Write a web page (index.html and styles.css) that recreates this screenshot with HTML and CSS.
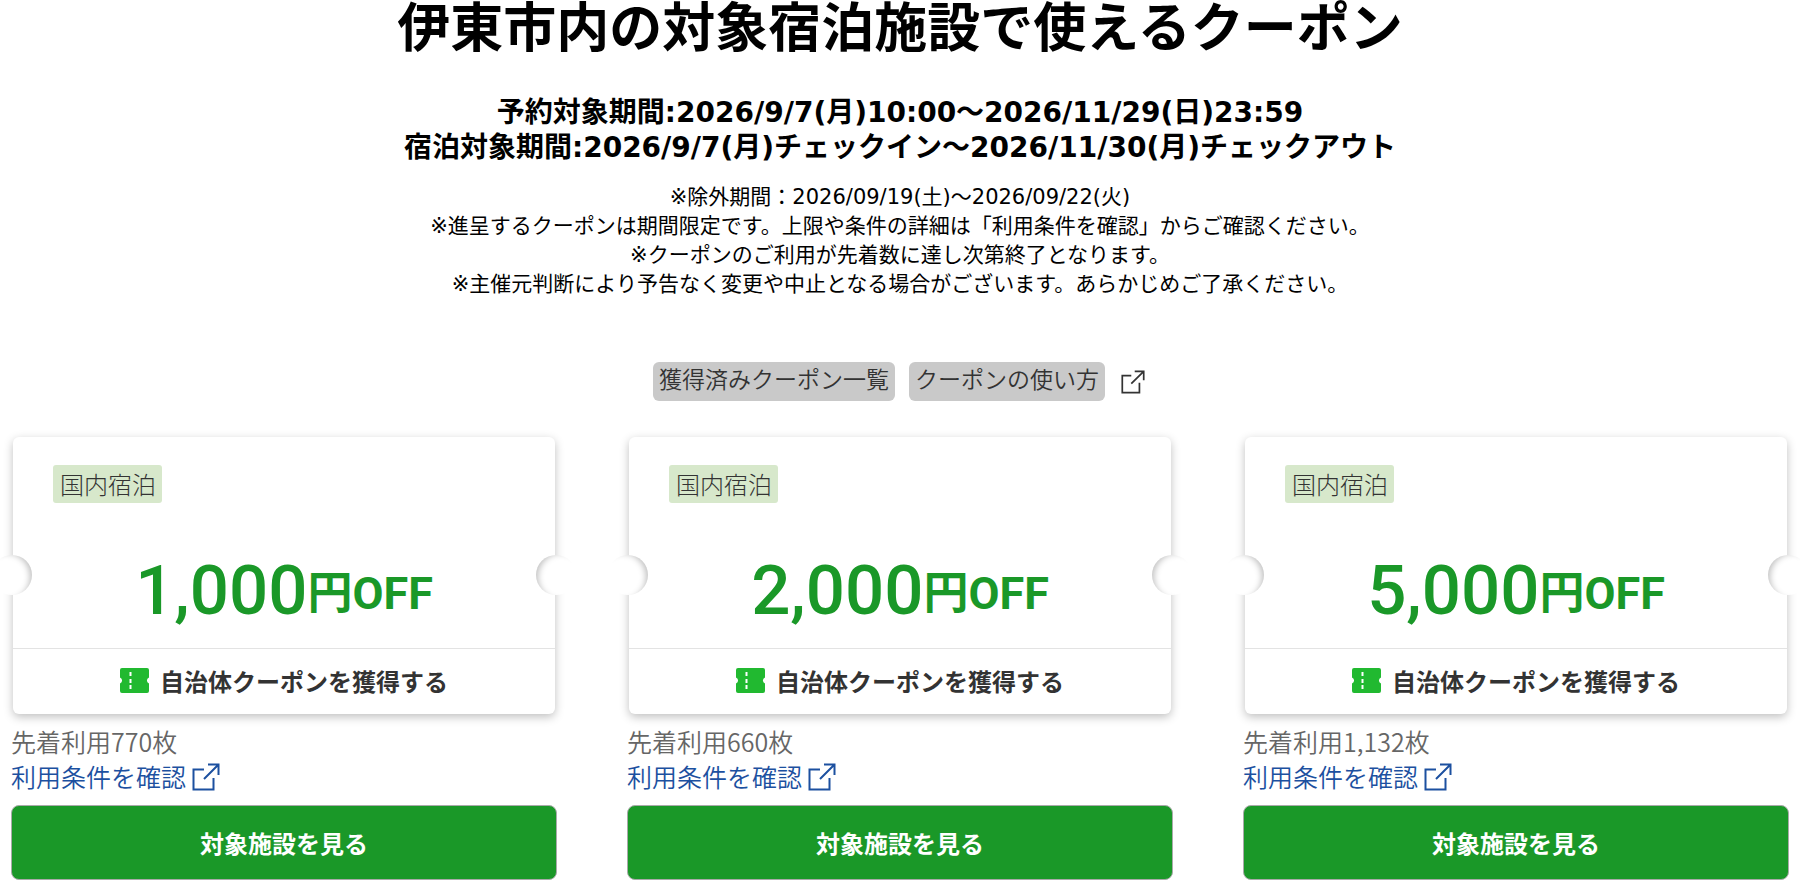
FILE: index.html
```
<!DOCTYPE html>
<html lang="ja">
<head>
  <meta charset="UTF-8">
  <title>伊東市内の対象宿泊施設で使えるクーポン</title>
  <link rel="stylesheet" href="styles.css">
</head>
<body>

  <!-- アイコン定義 -->
  <svg class="defs" aria-hidden="true">
    <symbol id="icon-external" viewBox="0 0 28 28">
      <path d="M12 6.500H1.500V26.500H21.500V15" />
      <path d="M16 1.500H26.500V12M26.500 1.500L12 16" />
    </symbol>
    <symbol id="icon-ticket" viewBox="0 0 29 25">
      <path fill="#21b930" d="M2 0H27Q29 0 29 2V9.500A3.200 3.200 0 0 0 29 15.500V23Q29 25 27 25H2Q0 25 0 23V15.500A3.200 3.200 0 0 0 0 9.500V2Q0 0 2 0Z" />
      <path stroke="#fff" stroke-width="2" d="M10.500 4V8M10.500 11V15M10.500 17V21" />
    </symbol>
  </svg>

  <header class="intro">
    <h1>伊東市内の対象宿泊施設で使えるクーポン</h1>
    <h2>
      予約対象期間:2026/9/7(月)10:00～2026/11/29(日)23:59<br>
      宿泊対象期間:2026/9/7(月)チェックイン～2026/11/30(月)チェックアウト
    </h2>
    <p class="notes">
      ※除外期間：2026/09/19(土)～2026/09/22(火)<br>
      ※進呈するクーポンは期間限定です。上限や条件の詳細は「利用条件を確認」からご確認ください。<br>
      ※クーポンのご利用が先着数に達し次第終了となります。<br>
      ※主催元判断により予告なく変更や中止となる場合がございます。あらかじめご了承ください。
    </p>
  </header>

  <nav class="coupon-nav">
    <a href="#mycoupon" class="nav-link">獲得済みクーポン一覧</a>
    <a href="#howto" class="nav-link">クーポンの使い方</a>
    <a href="#howto" class="nav-icon" aria-label="別ウィンドウで開く"><svg class="icon-small"><use href="#icon-external" /></svg></a>
  </nav>

  <main class="coupons">
    <section class="coupon">
      <div class="ticket">
        <div class="ticket-body">
          <span class="tag">国内宿泊</span>
          <p class="price">1,000<span class="unit">円OFF</span></p>
        </div>
        <button type="button" class="get">
          <svg class="icon-ticket"><use href="#icon-ticket" /></svg>自治体クーポンを獲得する
        </button>
      </div>
      <p class="stock">先着利用770枚</p>
      <a href="#terms" class="terms">利用条件を確認<svg class="icon-external"><use href="#icon-external" /></svg></a>
      <a href="#hotels" class="search">対象施設を見る</a>
    </section>

    <section class="coupon">
      <div class="ticket">
        <div class="ticket-body">
          <span class="tag">国内宿泊</span>
          <p class="price">2,000<span class="unit">円OFF</span></p>
        </div>
        <button type="button" class="get">
          <svg class="icon-ticket"><use href="#icon-ticket" /></svg>自治体クーポンを獲得する
        </button>
      </div>
      <p class="stock">先着利用660枚</p>
      <a href="#terms" class="terms">利用条件を確認<svg class="icon-external"><use href="#icon-external" /></svg></a>
      <a href="#hotels" class="search">対象施設を見る</a>
    </section>

    <section class="coupon">
      <div class="ticket">
        <div class="ticket-body">
          <span class="tag">国内宿泊</span>
          <p class="price">5,000<span class="unit">円OFF</span></p>
        </div>
        <button type="button" class="get">
          <svg class="icon-ticket"><use href="#icon-ticket" /></svg>自治体クーポンを獲得する
        </button>
      </div>
      <p class="stock">先着利用1,132枚</p>
      <a href="#terms" class="terms">利用条件を確認<svg class="icon-external"><use href="#icon-external" /></svg></a>
      <a href="#hotels" class="search">対象施設を見る</a>
    </section>
  </main>

</body>
</html>
```

FILE: styles.css
```
* {
  box-sizing: border-box;
}
body {
  margin: 0;
  overflow-x: hidden;
  background: #fff;
  color: #333;
  font-family: "Noto Sans CJK JP", sans-serif;
  font-size: 24px;
}
h1, h2, p {
  margin: 0;
}
a {
  text-decoration: none;
}
.defs {
  display: none;
}

/* 見出し */
.intro {
  color: #000;
  text-align: center;
}
h1 {
  font-size: 53px;
  line-height: 48px;
}
h2 {
  margin-top: 47px;
  font-family: "DejaVu Sans", "Noto Sans CJK JP", sans-serif;
  font-size: 28px;
  line-height: 35px;
}
.notes {
  margin-top: 18px;
  font-family: "DejaVu Sans", "Noto Sans CJK JP", sans-serif;
  font-size: 21px;
  line-height: 29px;
}

/* ナビ */
.coupon-nav {
  display: flex;
  justify-content: center;
  align-items: center;
  margin-top: 63px;
}
.nav-link {
  margin-right: 14px;
  padding: 0 6px 6px;
  border-radius: 6px;
  background: #c9c9c9;
  color: #333;
  font-size: 23px;
  font-weight: 350;
  line-height: 33px;
}
.nav-icon {
  display: flex;
  padding: 0 2px;
  color: #333;
}
.icon-small,
.icon-external {
  width: 24px;
  height: 24px;
  fill: none;
  stroke: currentColor;
  stroke-width: 2;
}

/* クーポン */
.coupons {
  display: grid;
  grid-template-columns: repeat(3, 1fr);
  gap: 70px;
  padding: 36px 11px 0;
}
.coupon {
  display: flex;
  flex-direction: column;
}
.ticket {
  margin: 0 2px;
  border-radius: 6px;
  background: #fff;
  box-shadow: 0 3px 10px rgba(0, 0, 0, 0.25);
}
.ticket-body {
  position: relative;
  padding: 28px 40px 17px;
}
.ticket-body::before,
.ticket-body::after {
  content: "";
  position: absolute;
  top: 118px;
  width: 40px;
  height: 40px;
  border-radius: 50%;
  background: #fff;
}
.ticket-body::before {
  left: -21px;
  box-shadow: inset -6px 2px 6px -4px rgba(0, 0, 0, 0.25);
}
.ticket-body::after {
  right: -21px;
  box-shadow: inset 6px 2px 6px -4px rgba(0, 0, 0, 0.25);
}
.tag {
  display: inline-block;
  padding: 0 6px 0 7px;
  border-radius: 3px;
  background: #d7e8cb;
  font-weight: 300;
  line-height: 38px;
  vertical-align: top;
}
.price {
  margin-top: 48px;
  color: #1a9828;
  font-family: Roboto, "Noto Sans CJK JP", sans-serif;
  font-size: 69px;
  font-weight: 500;
  line-height: 80px;
  text-align: center;
}
.unit {
  font-size: 45px;
  font-weight: 700;
  line-height: 40px;
  vertical-align: 5px;
}
.get {
  display: flex;
  justify-content: center;
  align-items: center;
  gap: 11px;
  width: 100%;
  height: 66px;
  padding: 0 0 2px;
  border: 0;
  border-top: 1px solid #e3e3e3;
  background: none;
  color: #333;
  font: bold 24px "Noto Sans CJK JP", sans-serif;
}
.icon-ticket {
  width: 29px;
  height: 25px;
}
.stock {
  margin-top: 10px;
  color: #666;
  font-size: 25px;
  font-weight: 350;
  line-height: 35px;
}
.terms {
  display: flex;
  align-items: center;
  gap: 6px;
  color: #1c50a0;
  font-size: 25px;
  font-weight: 350;
  line-height: 35px;
}
.icon-external {
  width: 28px;
  height: 28px;
}
.search {
  margin-top: 11px;
  border: 1px solid #aaa;
  border-radius: 8px;
  background: #1a9828;
  color: #fff;
  font-weight: bold;
  line-height: 73px;
  text-align: center;
}
```
